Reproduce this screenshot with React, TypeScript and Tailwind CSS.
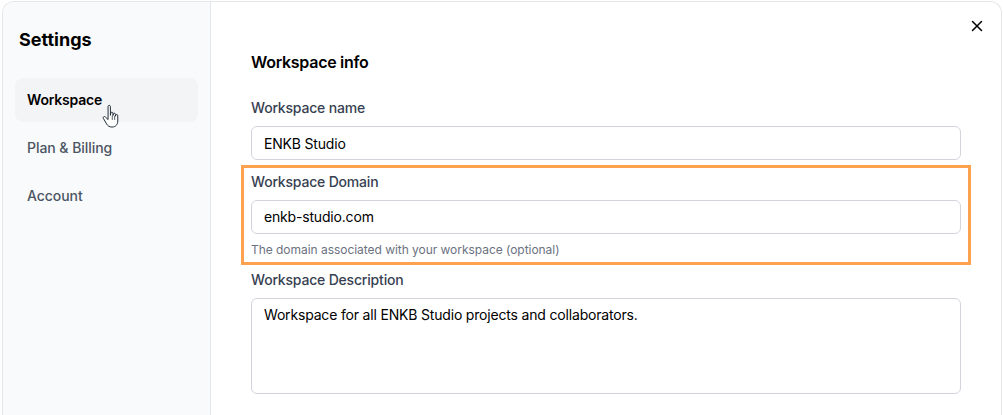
const navItems = [
  { label: 'Workspace', active: true },
  { label: 'Plan & Billing', active: false },
  { label: 'Account', active: false },
];

function HandCursor() {
  return (
    <svg width="21" height="28" viewBox="0 0 18 24" className="absolute left-[87px] top-[25px]">
      <path
        d="M5.2 3c0-1.3 2-1.3 2 0v7.6l.3-2c.2-1.1 1.9-1 1.9.2v2l.3-1.4c.3-1 1.8-.8 1.8.3v1.6l.3-.9c.4-.9 1.7-.6 1.7.4v4.6c0 3-1.8 5.2-4.8 5.2-2.4 0-3.6-.9-4.8-2.7L1.2 13.2c-.7-1.1.7-2.2 1.7-1.2l2.3 2.2z"
        fill="#fff"
        stroke="#1f2937"
        strokeWidth="0.85"
        strokeLinejoin="round"
      />
      <path d="M8.8 11v3.5M10.9 11v3.5" stroke="#1f2937" strokeWidth="0.65" />
    </svg>
  );
}

function Sidebar() {
  return (
    <aside className="w-[208px] shrink-0 border-r border-[#e5e7eb] bg-[#f9fafb] px-[12px] pt-[25px]">
      <h2 className="pl-[4px] text-[18px] leading-[26px] font-bold text-black">Settings</h2>
      <nav className="mt-[25px] flex w-[183px] flex-col gap-[4px]">
        {navItems.map((item) => (
          <div
            key={item.label}
            className={
              item.active
                ? 'relative flex h-[44px] items-center rounded-lg bg-[#f3f4f6] px-3 pb-px text-[14px] tracking-[-0.2px] font-semibold text-black'
                : 'flex h-[44px] items-center rounded-lg px-3 pb-px text-[14px] tracking-[-0.05px] font-medium text-[#4b5563]'
            }
          >
            {item.label}
            {item.active && <HandCursor />}
          </div>
        ))}
      </nav>
    </aside>
  );
}

export default function App() {
  return (
    <div className="h-[415px] w-[1003px] overflow-hidden bg-white pt-px pl-[2px] font-['Inter',sans-serif]">
      <div className="relative flex h-[430px] w-[1000px] overflow-hidden rounded-t-xl border-x border-t border-[#e5e7eb] bg-white">
        <Sidebar />
        <main className="flex-1 px-[40px] pt-[49px]">
          <h3 className="text-[16px] leading-[22px] tracking-[-0.28px] font-semibold text-black">Workspace info</h3>

          <label className="mt-[25px] block text-[14px] leading-[20px] tracking-[-0.19px] font-medium text-[#374151]">Workspace name</label>
          <input
            readOnly
            value="ENKB Studio"
            className="mt-[8px] block h-[34px] w-full rounded-md border border-[#d1d5db] px-3 text-[14px] tracking-[-0.18px] text-black"
          />

          <div className="relative mt-[12px]">
            <label className="block text-[14px] leading-[20px] tracking-[-0.19px] font-medium text-[#374151]">Workspace Domain</label>
            <input
              readOnly
              value="enkb-studio.com"
              className="mt-[8px] block h-[34px] w-full rounded-md border border-[#d1d5db] px-3 pb-px text-[14px] tracking-[-0.18px] text-black"
            />
            <p className="mt-[8px] text-[12px] leading-[16px] tracking-[-0.04px] text-[#6b7280]">The domain associated with your workspace (optional)</p>
            <div className="pointer-events-none absolute -top-[7px] -right-[10px] -bottom-[7px] -left-[10px] border-[3px] border-[#ffa24f]" />
          </div>

          <label className="mt-[12px] block text-[14px] leading-[20px] tracking-[-0.19px] font-medium text-[#374151]">Workspace Description</label>
          <textarea
            readOnly
            value="Workspace for all ENKB Studio projects and collaborators."
            className="mt-[8px] block h-[96px] w-full resize-none rounded-md border border-[#d1d5db] px-3 py-[6px] text-[14px] leading-[20px] tracking-[-0.18px] text-black"
          />
        </main>
        <button className="absolute top-[16px] right-[16px] text-black">
          <svg width="16" height="16" viewBox="0 0 16 16" fill="none" stroke="currentColor" strokeWidth="1.5" strokeLinecap="round">
            <path d="M3.5 3.5l9 9M12.5 3.5l-9 9" />
          </svg>
        </button>
      </div>
    </div>
  );
}
